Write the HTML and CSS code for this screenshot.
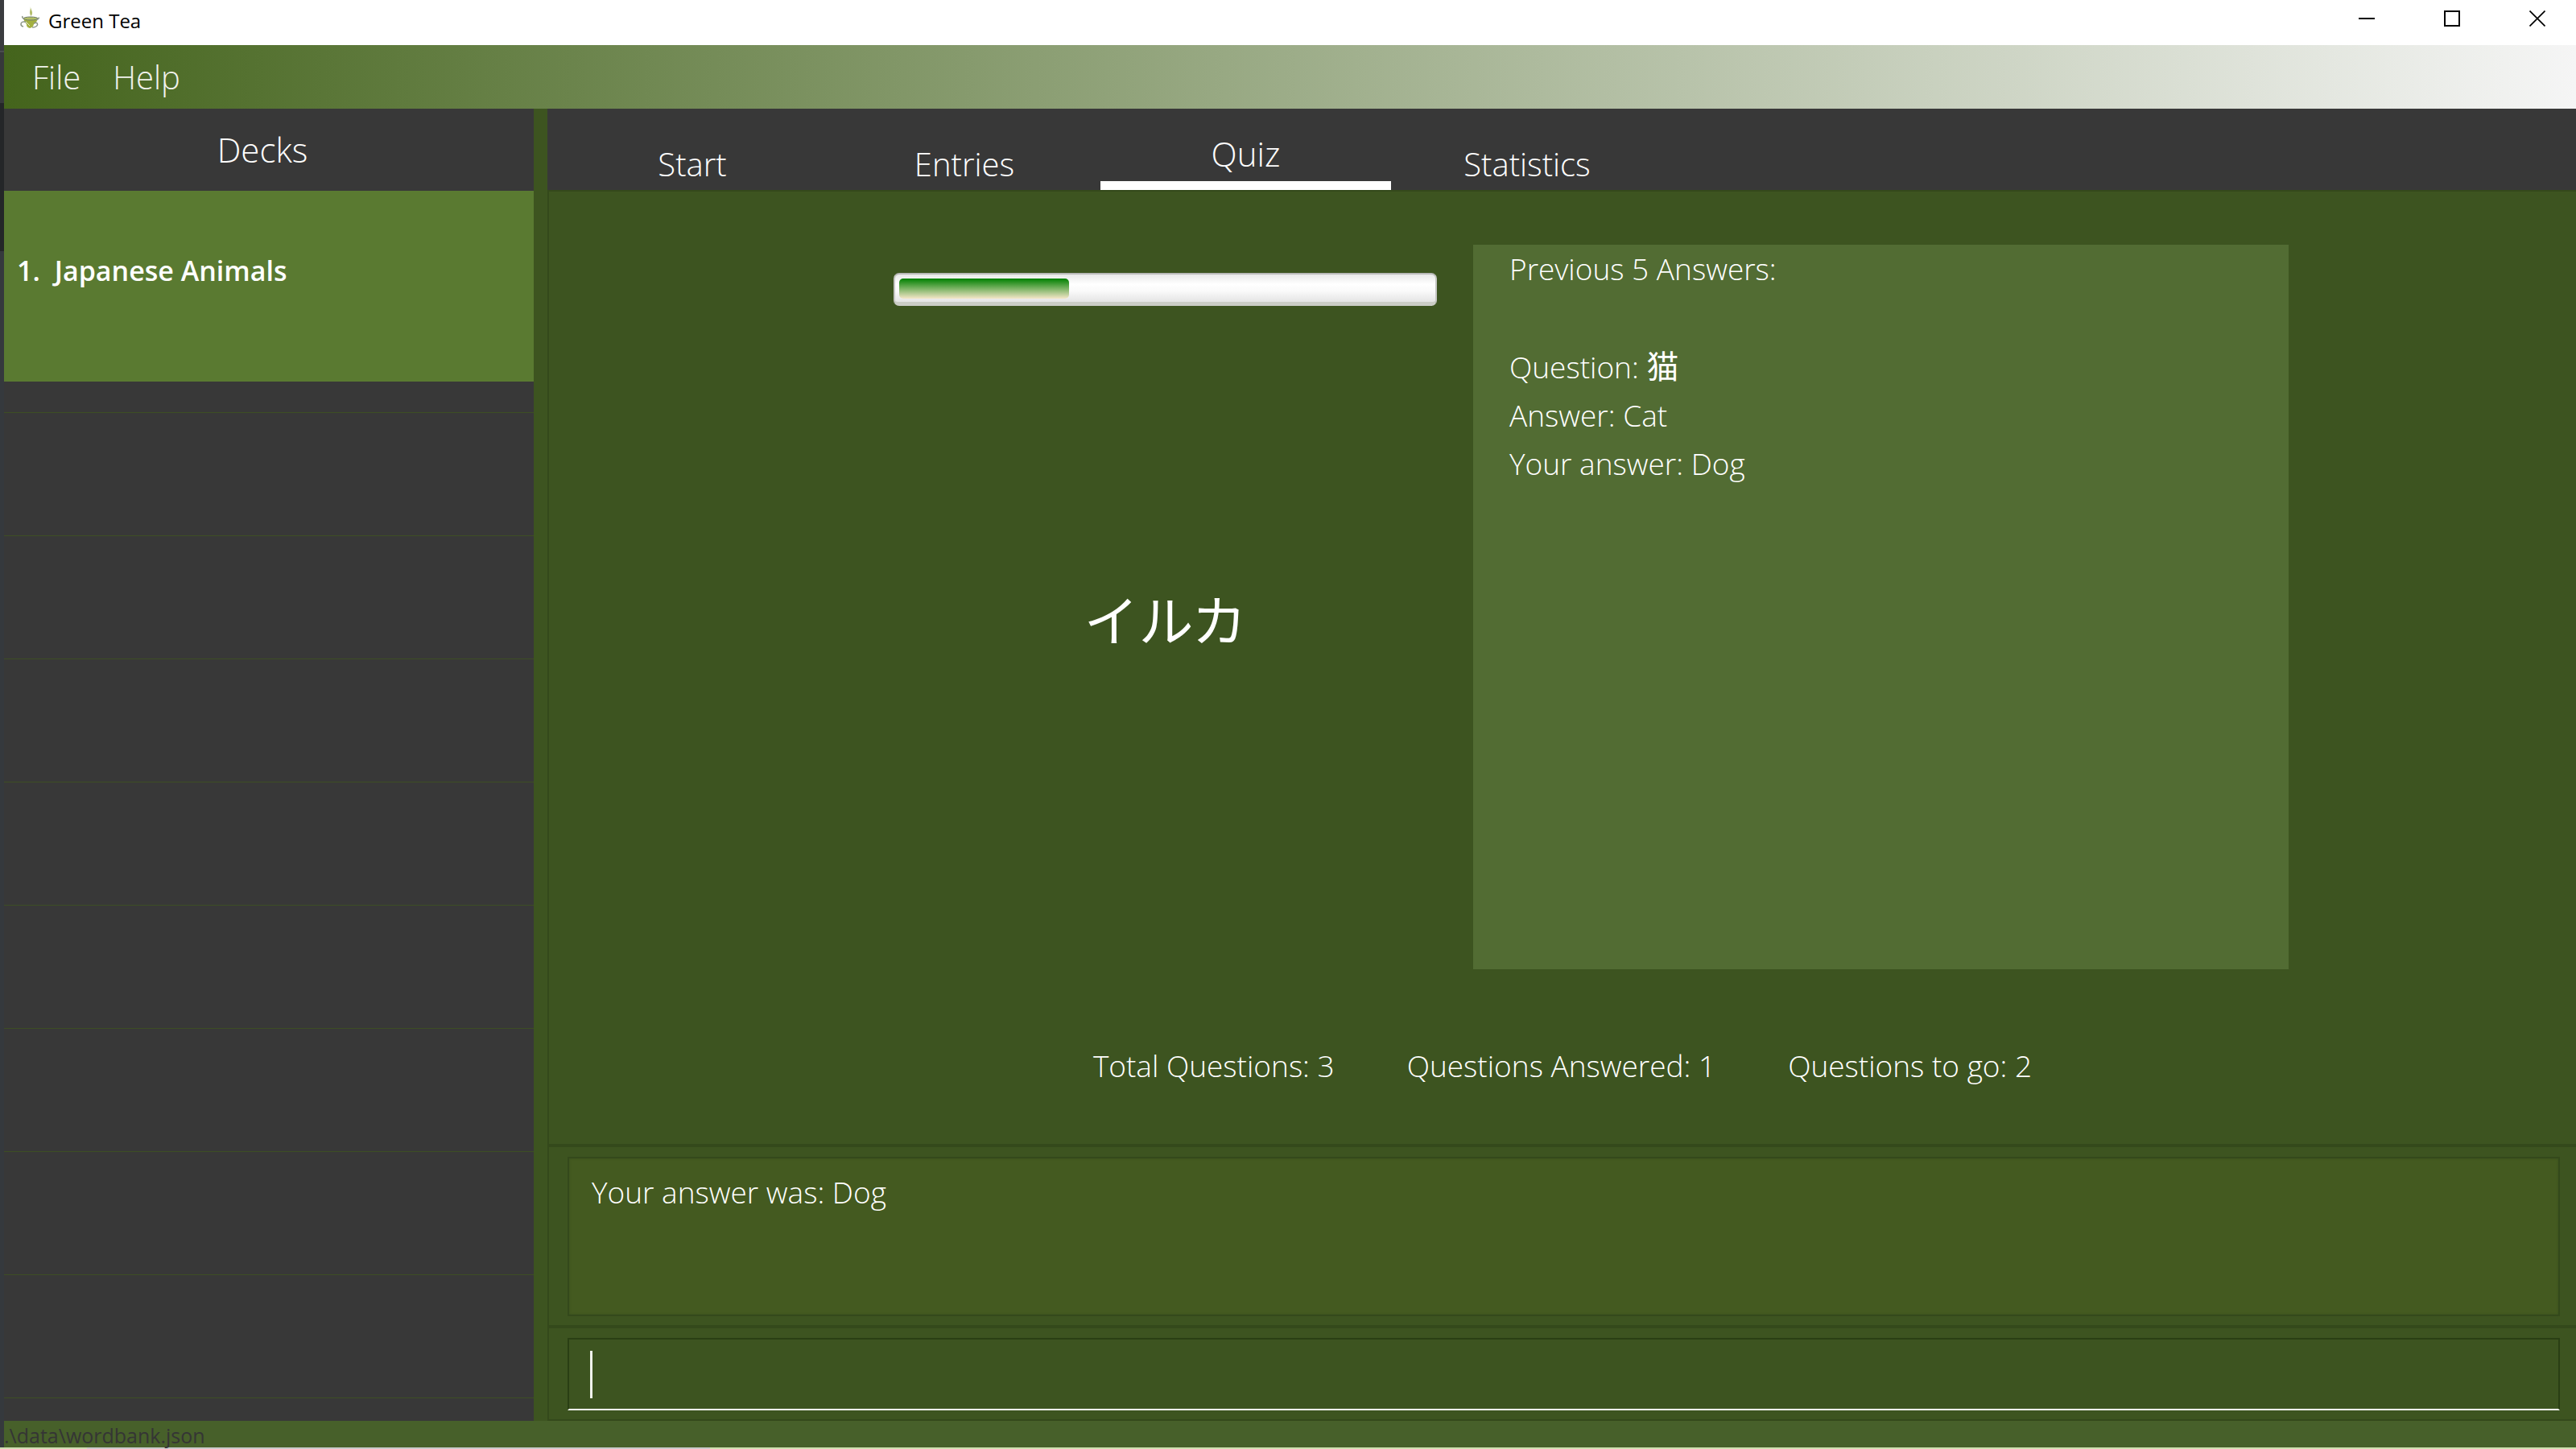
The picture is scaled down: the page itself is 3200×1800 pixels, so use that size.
FILE: index.html
```html
<!DOCTYPE html>
<html lang="en">
<head>
<meta charset="utf-8">
<title>Green Tea</title>
<link rel="stylesheet" href="styles.css">
</head>
<body class="desktop">
<div class="window">
  <header class="titlebar">
    <svg class="app-icon" viewBox="0 0 24 28" aria-hidden="true">
      <path d="M12.500 0C14 4 10 6.500 13.500 12C17 8 14 5 12.500 0Z" fill="#b3bd6c"/>
      <path d="M4 15Q13 18.500 22 15Q21 19.500 17 22Q16.500 26 12 27Q7.500 26 8 22Q5 19 4 15Z" fill="#a3b03f"/>
      <ellipse cx="13" cy="15" rx="9" ry="2" fill="#b3bf66" stroke="#6f7c68" stroke-width="1"/>
      <path d="M3 12Q2 14 5 15.500M23 13.500Q24 15.500 20 16.500M8 19.500Q1 18 1 22Q1 24.500 4 25M17 21Q22 19 21.500 23Q20 26 15 26" fill="none" stroke="#8b9586" stroke-width="1.500"/>
      <path d="M7 19L12 24" fill="none" stroke="#e6ead0" stroke-width="1"/>
    </svg>
    <h1 class="app-name">Green Tea</h1>
    <div class="window-controls">
      <button class="control" type="button" aria-label="Minimize"><svg class="glyph" viewBox="0 0 20 20"><path d="M0 10H20" stroke="#000" stroke-width="2"/></svg></button>
      <button class="control" type="button" aria-label="Maximize"><svg class="glyph" viewBox="0 0 20 20"><rect x="1" y="1" width="18" height="18" fill="none" stroke="#000" stroke-width="2"/></svg></button>
      <button class="control" type="button" aria-label="Close"><svg class="glyph" viewBox="0 0 20 20"><path d="M.5 .5L19.500 19.500M19.500 .5L.5 19.500" stroke="#000" stroke-width="1.700"/></svg></button>
    </div>
  </header>
  <nav class="menubar">
    <button class="menu" type="button">File</button>
    <button class="menu" type="button">Help</button>
  </nav>
  <div class="workspace">
    <aside class="sidebar">
      <h2 class="sidebar-title">Decks</h2>
      <ol class="decks">
        <li class="deck"><span>1.</span><span>Japanese Animals</span></li>
      </ol>
      <div class="empty-rows"></div>
    </aside>
    <main class="main">
      <div class="tabs" role="tablist">
        <button class="tab" type="button" role="tab">Start</button>
        <button class="tab" type="button" role="tab">Entries</button>
        <button class="tab tab-active" type="button" role="tab" aria-selected="true">Quiz</button>
        <button class="tab" type="button" role="tab">Statistics</button>
      </div>
      <section class="pane quiz">
        <div class="board">
          <div class="card">
            <progress class="progress" value="1" max="3" aria-label="Quiz progress"></progress>
            <p class="word" lang="ja">イルカ</p>
          </div>
          <div class="history">
            <p class="history-title">Previous 5 Answers:</p>
            <p>Question: <span class="kanji" lang="ja">猫</span></p>
            <p>Answer: Cat</p>
            <p>Your answer: Dog</p>
          </div>
        </div>
        <div class="totals">
          <span>Total Questions: 3</span>
          <span>Questions Answered: 1</span>
          <span>Questions to go: 2</span>
        </div>
      </section>
      <section class="pane result-pane">
        <output class="result">Your answer was: Dog</output>
      </section>
      <section class="pane command-pane">
        <div class="command">
          <span class="caret"></span>
          <input class="command-input" type="text" aria-label="Command">
        </div>
      </section>
    </main>
  </div>
  <footer class="statusbar">.\data\wordbank.json</footer>
</div>
</body>
</html>
```
FILE: styles.css
```css
* { box-sizing: border-box; }

.desktop {
  margin: 0;
  min-height: 100vh;
  display: flex;
  padding: 0 0 2px 5px;
  background:
    linear-gradient(#3a3c3f 0 63px, #4a4c4f 63px 65px, #36383a 65px 128px, #242628 128px 312px, #35393d 312px) 0 0 / 5px calc(100% - 2px) no-repeat,
    linear-gradient(to right, #cfdfb2 0 108px, #cbcbcb 108px 882px, #cfe0b0 882px);
  font-family: "Open Sans", "Noto Sans", "Noto Sans CJK JP", sans-serif;
  font-weight: 300;
  font-size: 40px;
  line-height: 60px;
  color: #fff;
}

.window {
  flex: 1;
  min-width: 0;
  display: flex;
  flex-direction: column;
  background: #3d5420;
}

h1, h2, p, ol { margin: 0; padding: 0; font: inherit; }

button {
  margin: 0;
  padding: 0;
  border: 0;
  background: none;
  font: inherit;
  color: inherit;
}

/* Title bar */
.titlebar {
  height: 56px;
  display: flex;
  align-items: center;
  padding: 0 0 4px 20px;
  background: #fff;
  color: #000;
}
.app-icon { width: 24px; height: 28px; margin-bottom: 8px; }
.app-name {
  flex: 1;
  padding-left: 11px;
  font-size: 24px;
  font-weight: 400;
  line-height: 32px;
}
.window-controls { display: flex; gap: 66px; padding: 0 28px 6px 0; }
.control { width: 40px; height: 46px; display: grid; place-items: center; }
.glyph { width: 20px; height: 20px; }

/* Menu bar */
.menubar {
  height: 79px;
  display: flex;
  align-items: center;
  gap: 40px;
  padding-left: 35px;
  background: linear-gradient(to right, #44641c, #f5f5f5);
  color: #f0f2ec;
}

.workspace { flex: 1; display: flex; gap: 17px; }

/* Deck list */
.sidebar {
  width: 658px;
  display: flex;
  flex-direction: column;
  background: #383838;
}
.sidebar-title {
  padding: 21px 16px 21px 0;
  font-size: 42px;
  text-align: center;
}
.decks { list-style: none; }
.deck {
  height: 237px;
  display: flex;
  gap: 18px;
  padding: 75px 16px;
  background: #5a7a31;
  font-size: 34px;
  font-weight: 600;
  line-height: 48px;
}
.empty-rows {
  flex: 1;
  background: repeating-linear-gradient(#383838 0 152px, #3d4e24 152px 153px) 0 -114px;
  background-size: 100% 1530px;
}

/* Tabs */
.main { flex: 1; min-width: 0; display: flex; flex-direction: column; }
.tabs {
  height: 101px;
  display: flex;
  padding-left: 11px;
  background: #383838;
}
.tab { width: 338px; padding-top: 37px; }
.tab-active {
  width: 361px;
  padding-top: 22px;
  border-bottom: 11px solid #fff;
  font-size: 42px;
}

/* Panes */
.pane { border: 2px solid #34491b; border-right: 0; }

.quiz { flex: 1; display: flex; flex-direction: column; padding-top: 66px; }
.board {
  display: grid;
  grid-template-columns: 675fr 1013fr;
  gap: 45px;
  height: 900px;
  padding: 0 357px 0 428px;
}
.card { display: flex; flex-direction: column; padding-top: 35px; }
.progress {
  appearance: none;
  display: block;
  width: 100%;
  height: 41px;
  padding: 5px 33px 4px 5px;
  border: 2px solid #c6c7c4;
  border-top-color: #b9b9b9;
  border-bottom: 5px solid #cbcdc6;
  border-radius: 7px;
  background: linear-gradient(#e8e8e8, #fff 35%, #fafafa 60%, #e4e4e4);
}
.progress::-webkit-progress-bar { background: none; }
.progress::-webkit-progress-value {
  border-radius: 5px;
  background: linear-gradient(#008000, #f5e6c8);
}
.word {
  padding-top: 340px;
  font-size: 68px;
  line-height: 96px;
  text-align: center;
  font-family: "Noto Sans CJK JP", sans-serif;
  font-weight: 400;
}
.history {
  padding-left: 45px;
  background: #526c33;
  font-size: 37px;
  line-height: 60px;
}
.history-title { padding-bottom: 62px; }
.kanji { font-size: 40px; font-weight: 400; line-height: 1; }
.totals {
  display: flex;
  justify-content: center;
  gap: 90px;
  padding-top: 90px;
  font-size: 37px;
}

.result-pane { height: 225px; padding: 12px 20px 11px 23px; }
.result {
  display: block;
  height: 198px;
  padding: 12px 28px;
  border: 2px solid #34491b;
  box-shadow: inset 0 0 2px 1px #3d5420;
  background: #445a20;
  font-size: 37px;
}

.command-pane { height: 117px; padding: 12px 20px 11px 23px; }
.command {
  height: 90px;
  display: flex;
  align-items: center;
  padding-left: 26px;
  border: 2px solid #2a3f14;
  border-bottom-color: #fff;
}
.caret { width: 3px; height: 59px; background: #f0f2ec; }
.command-input {
  flex: 1;
  height: 60px;
  border: 0;
  padding: 0;
  outline: 0;
  background: none;
  font: inherit;
  color: inherit;
}

.statusbar {
  height: 33px;
  background: #47602a;
  color: #353535;
  font-size: 25px;
  font-weight: 400;
  line-height: 36px;
}
```
